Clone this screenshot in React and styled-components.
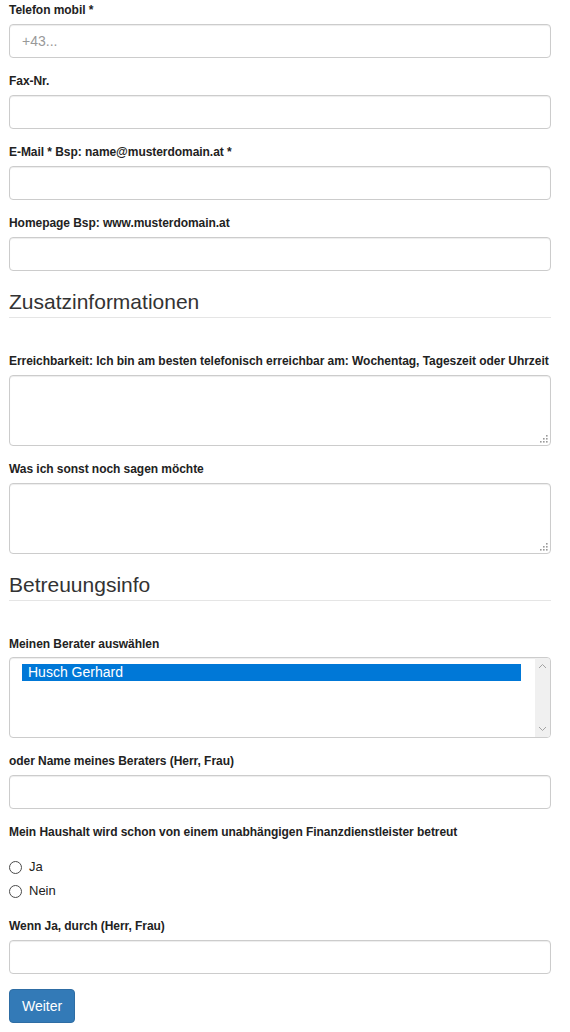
import React from 'react';
import styled, { createGlobalStyle } from 'styled-components';

const GlobalStyle = createGlobalStyle`
  html, body {
    margin: 0;
    padding: 0;
    background: #ffffff;
  }
  body {
    font-family: "Liberation Sans", Arial, Helvetica, sans-serif;
    color: #333333;
  }
  * {
    box-sizing: border-box;
  }
`;

const Page = styled.form`
  display: flex;
  flex-direction: column;
  width: 551px;
  padding: 2px 0 20px 9px;
`;

const Group = styled.div`
  display: flex;
  flex-direction: column;
  margin-bottom: 15px;
`;

const Label = styled.label`
  display: block;
  font-size: 12px;
  line-height: 17px;
  font-weight: bold;
  color: #222222;
  letter-spacing: -0.05px;
  white-space: nowrap;
  margin-bottom: 5px;
`;

const Input = styled.input`
  display: block;
  width: 100%;
  height: 34px;
  padding: 6px 12px;
  font-family: inherit;
  font-size: 14px;
  color: #555555;
  background: #ffffff;
  border: 1px solid #cccccc;
  border-radius: 4px;
  box-shadow: inset 0 1px 1px rgba(0, 0, 0, 0.075);
  outline: none;
  &::placeholder {
    color: #999999;
  }
`;

const AreaWrap = styled.div`
  position: relative;
  width: 100%;
`;

const TextArea = styled.textarea`
  display: block;
  width: 100%;
  height: 71px;
  padding: 6px 12px;
  font-family: inherit;
  font-size: 14px;
  color: #555555;
  border: 1px solid #cccccc;
  border-radius: 4px;
  box-shadow: inset 0 1px 1px rgba(0, 0, 0, 0.075);
  resize: none;
  outline: none;
`;

const Grip = styled.svg`
  position: absolute;
  right: 3px;
  bottom: 3px;
  width: 9px;
  height: 9px;
`;

const SectionTitle = styled.h3`
  margin: 4px 0 35px;
  padding-bottom: 4px;
  font-size: 21px;
  line-height: 23px;
  font-weight: normal;
  color: #333333;
  border-bottom: 1px solid #e5e5e5;
`;

const ListBox = styled.div`
  display: flex;
  height: 81px;
  margin-top: -1px;
  border: 1px solid #cccccc;
  border-radius: 4px;
  box-shadow: inset 0 1px 1px rgba(0, 0, 0, 0.075);
  overflow: hidden;
`;

const Options = styled.div`
  flex: 1;
  padding: 6px 14px 6px 12px;
`;

const Option = styled.div`
  height: 17px;
  padding: 0 6px;
  font-size: 14px;
  line-height: 17px;
  color: ${p => (p.$selected ? '#ffffff' : '#555555')};
  background: ${p => (p.$selected ? '#0078d7' : 'transparent')};
`;

const ScrollTrack = styled.div`
  width: 15px;
  display: flex;
  flex-direction: column;
  justify-content: space-between;
  align-items: center;
  padding: 5px 0;
  background: #f0f0f0;
`;

const Radios = styled.div`
  display: flex;
  flex-direction: column;
  gap: 4px;
  margin: 10px 0 18px;
`;

const RadioLabel = styled.label`
  display: flex;
  align-items: center;
  gap: 7px;
  height: 20px;
  font-size: 13px;
  color: #222222;
`;

const Radio = styled.input`
  appearance: none;
  width: 13px;
  height: 13px;
  margin: 3px 0 0;
  border: 1px solid #4a4a4a;
  border-radius: 50%;
  background: #ffffff;
`;

const Button = styled.button`
  align-self: flex-start;
  height: 34px;
  padding: 6px 12px;
  font-family: inherit;
  font-size: 14px;
  line-height: 20px;
  color: #ffffff;
  background: #337ab7;
  border: 1px solid #2e6da4;
  border-radius: 4px;
  cursor: pointer;
`;

const Chevron = ({ up }) => (
  <svg width="9" height="6" viewBox="0 0 9 6">
    <path
      d={up ? 'M1 5 L4.5 1.5 L8 5' : 'M1 1 L4.5 4.5 L8 1'}
      fill="none"
      stroke="#a3a3a3"
      strokeWidth="1"
    />
  </svg>
);

const ResizeGrip = () => (
  <Grip viewBox="0 0 9 9">
    {[[7, 1], [4, 4], [7, 4], [1, 7], [4, 7], [7, 7]].map(([x, y]) => (
      <rect key={x + '-' + y} x={x} y={y} width="1.6" height="1.6" fill="#9a9a9a" />
    ))}
  </Grip>
);

const Field = ({ label, placeholder }) => (
  <Group>
    <Label>{label}</Label>
    <Input type="text" placeholder={placeholder} />
  </Group>
);

const AreaField = ({ label }) => (
  <Group>
    <Label>{label}</Label>
    <AreaWrap>
      <TextArea />
      <ResizeGrip />
    </AreaWrap>
  </Group>
);

function App() {
  return (
    <>
      <GlobalStyle />
      <Page onSubmit={e => e.preventDefault()}>
        <Field label="Telefon mobil *" placeholder="+43..." />
        <Field label="Fax-Nr." />
        <Field label="E-Mail * Bsp: name@musterdomain.at *" />
        <Field label="Homepage Bsp: www.musterdomain.at" />

        <SectionTitle>Zusatzinformationen</SectionTitle>
        <AreaField label="Erreichbarkeit: Ich bin am besten telefonisch erreichbar am: Wochentag, Tageszeit oder Uhrzeit" />
        <AreaField label="Was ich sonst noch sagen möchte" />

        <SectionTitle>Betreuungsinfo</SectionTitle>
        <Group>
          <Label>Meinen Berater auswählen</Label>
          <ListBox role="listbox">
            <Options>
              <Option $selected role="option">Husch Gerhard</Option>
            </Options>
            <ScrollTrack>
              <Chevron up />
              <Chevron />
            </ScrollTrack>
          </ListBox>
        </Group>
        <Field label="oder Name meines Beraters (Herr, Frau)" />

        <Label>Mein Haushalt wird schon von einem unabhängigen Finanzdienstleister betreut</Label>
        <Radios>
          <RadioLabel>
            <Radio type="radio" name="betreut" value="ja" />
            Ja
          </RadioLabel>
          <RadioLabel>
            <Radio type="radio" name="betreut" value="nein" />
            Nein
          </RadioLabel>
        </Radios>
        <Field label="Wenn Ja, durch (Herr, Frau)" />

        <Button type="submit">Weiter</Button>
      </Page>
    </>
  );
}

export default App;
